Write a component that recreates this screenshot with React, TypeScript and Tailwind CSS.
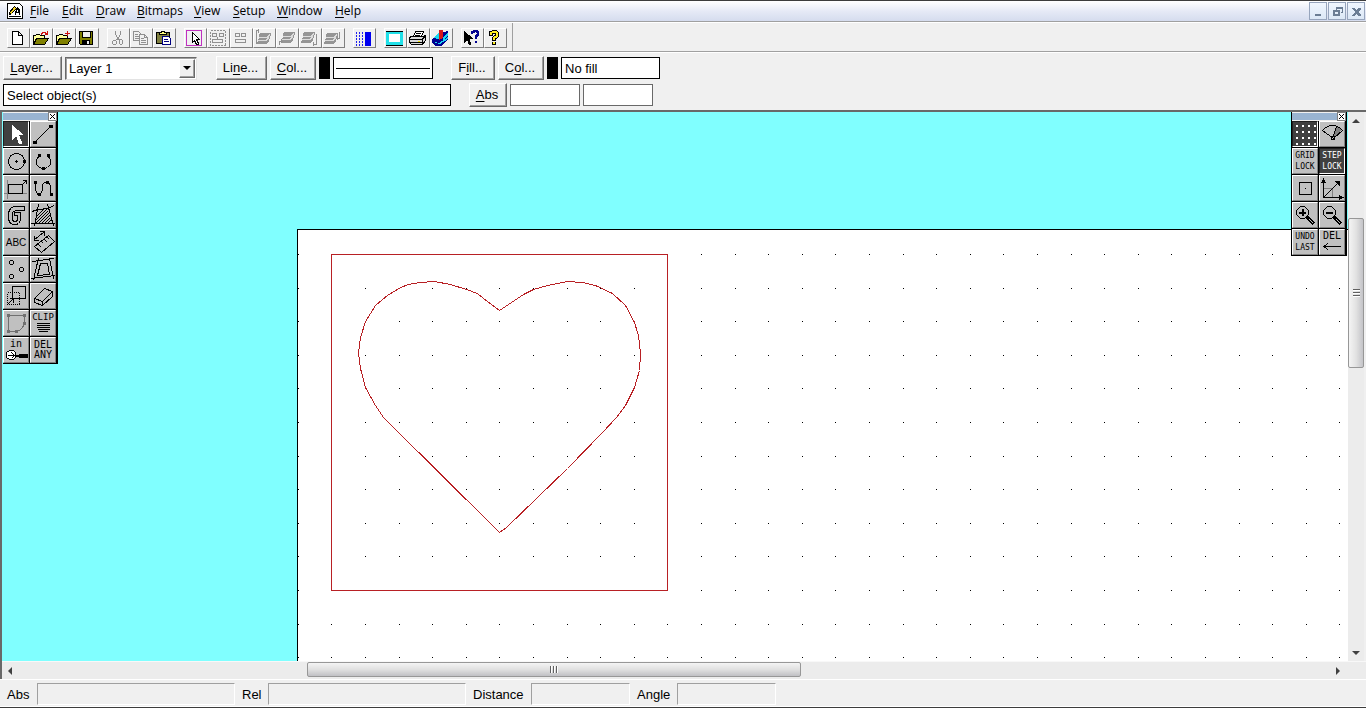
import React, { useState } from "react";
import clsx from "clsx";

const BEVEL =
  "border border-t-white border-l-white border-r-[#696969] border-b-[#696969] bg-[#f0f0f0] shadow-[inset_-1px_-1px_0_#a0a0a0]";

interface IconProps {
  size?: "bar" | "tool";
  children: React.ReactNode;
}

const Icon = ({ size = "bar", children }: IconProps) => (
  <svg
    className={clsx("block shrink-0", size === "bar" ? "h-5 w-[22px]" : "h-[26px] w-[26px]")}
    viewBox={size === "bar" ? "0 0 22 20" : "0 0 26 26"}
    fill="none"
    stroke="#000"
    shapeRendering="crispEdges"
    aria-hidden="true"
  >
    {children}
  </svg>
);

// Label with an underlined accelerator letter
const Accel = ({ text, at = 0 }: { text: string; at?: number }) => (
  <span className="whitespace-pre">
    {text.slice(0, at)}
    <span className="underline underline-offset-2">{text[at]}</span>
    {text.slice(at + 1)}
  </span>
);

/* ---------- toolbar icons ---------- */

const Folder = () => (
  <>
    <path d="M3.5 16.5v-9h2l1-1h3l1 1h4v3" fill="#ffff9c" />
    <path d="M3.5 16.5l3-6h12l-4 6z" fill="#808000" />
  </>
);

const Layers = ({ dx = 0, dy = 0 }: { dx?: number; dy?: number }) => (
  <g transform={`translate(${dx} ${dy})`} fill="#959595" stroke="none">
    <path d="M6 3h11v2l-1 1v2l-1 1v2l-3 3h-9v-2l1-1v-2l1-1v-2z" />
    <path d="M5 7.500h8l3-3M4 10.500h8l3-3" stroke="#dcdcdc" />
  </g>
);

const toolbarGroups: { name: string; icon: React.ReactNode }[][] = [
  [
    {
      name: "New",
      icon: <path d="M5.5 3.5h6l4 4v9h-10zM11.5 3.5v4h4" fill="#fff" />,
    },
    {
      name: "Open",
      icon: (
        <>
          <Folder />
          <path d="M11.5 6.5v-1h1v-1h3v1h1v1M17.5 3v4M15 6.5h3" stroke="#d01010" />
        </>
      ),
    },
    {
      name: "Merge",
      icon: (
        <>
          <Folder />
          <path d="M12 5.5h5M14.5 3v5" stroke="#d01010" />
        </>
      ),
    },
    {
      name: "Save",
      icon: (
        <>
          <path d="M3.5 3.5h13v13h-12l-1-1z" fill="#808000" />
          <path d="M6.5 3.5h8v6h-8z" fill="#f0f0f0" />
          <path d="M6 12h8v5h-8z" fill="#000" stroke="none" />
          <path d="M11 13h2v3h-2z" fill="#f0f0f0" stroke="none" />
        </>
      ),
    },
  ],
  [
    {
      name: "Cut",
      icon: (
        <g stroke="#909090">
          <path d="M8.5 3v3l1 2 1 2 2 2M13.5 3v3l-1 2-1 2-2 2" />
          <path d="M6.5 12.5h2l1 1v2l-1 1h-2l-1-1v-2zM13.5 11.5h1l1 1v3l-1 1h-1l-1-1v-3z" />
        </g>
      ),
    },
    {
      name: "Copy",
      icon: (
        <g stroke="#909090" fill="#f0f0f0">
          <path d="M3.5 3.5h5l3 3v6h-8zM5 6.5h3M5 8.5h4M5 10.5h4" />
          <path d="M9.5 6.5h5l3 3v7h-8zM14.5 6.5v3h3M11 10.5h3M11 12.5h5M11 14.5h5" />
        </g>
      ),
    },
    {
      name: "Paste",
      icon: (
        <>
          <path d="M3.5 4.5h13v11h-13z" fill="#808040" />
          <path d="M6.5 6.5v-2h2v-1h3v1h2v2z" fill="#ffff80" />
          <path d="M9.5 8.5h6l2 2v6h-8z" fill="#fff" stroke="#000080" />
          <path d="M11 11.5h4M11 13.5h5" stroke="#000080" />
        </>
      ),
    },
  ],
  [
    {
      name: "Select",
      icon: (
        <>
          <path d="M2.5 2.5h15v15h-15z" stroke="#c030c0" />
          <path d="M8.5 4.5v10l2-2 2 4h2v-1l-2-4h3z" fill="#fff" />
        </>
      ),
    },
    {
      name: "Group",
      icon: (
        <g stroke="#909090">
          <path d="M3.5 2.5h15v15h-15z" strokeDasharray="2 1" />
          <path d="M5.5 5.5h4v3h-4zM12.5 5.5h4v3h-4zM5.5 11.5h10v3h-10zM10.5 9v3" />
        </g>
      ),
    },
    {
      name: "Ungroup",
      icon: (
        <path
          d="M5.5 5.5h4v3h-4zM11.5 5.5h4v3h-4zM5.5 11.5h10v3h-10z"
          stroke="#909090"
        />
      ),
    },
    {
      name: "To front",
      icon: (
        <>
          <Layers dx={1} dy={2} />
          <path d="M6 2.500h-2.500v13M5.500 1v4" stroke="#909090" />
        </>
      ),
    },
    {
      name: "Forward",
      icon: (
        <>
          <Layers dx={2} dy={1} />
          <path d="M3.500 17v-4h3M5.500 11v4" stroke="#909090" />
        </>
      ),
    },
    {
      name: "Backward",
      icon: (
        <>
          <Layers dx={-1} dy={1} />
          <path d="M17.500 6v10h-4M14.500 14v4" stroke="#909090" />
        </>
      ),
    },
    {
      name: "To back",
      icon: (
        <>
          <Layers dx={-1} dy={2} />
          <path d="M17.500 4v6h-3M15.500 8v4" stroke="#909090" />
        </>
      ),
    },
  ],
  [
    {
      name: "Bitmap grid",
      icon: (
        <>
          <path d="M3.5 4v14M6.5 4v14M9.5 4v14" strokeDasharray="2 1" stroke="#2020f0" />
          <path d="M12 4h6v14h-6z" fill="#0000f0" stroke="none" />
        </>
      ),
    },
  ],
  [
    {
      name: "Full view",
      icon: (
        <>
          <path d="M2 3h17v14h-17z" fill="#20e0e8" stroke="none" />
          <path d="M2 3.5h17M2 17.5h17" />
          <path d="M5 6h11v8h-11z" fill="#fff" stroke="none" />
        </>
      ),
    },
    {
      name: "Print",
      icon: (
        <>
          <path d="M6.5 8.5l2-5h8l-2 5z" fill="#fff" />
          <path d="M9 5.5h5M8 7.5h5" />
          <path d="M2.5 9.5l2-1h12l2-1v5l-3 4h-11l-2-2z" fill="#d8d8d8" />
          <path d="M3 11.5h12l3-3M3 14.5h12v2M15.5 11v5" />
          <path d="M11 13.5h2" stroke="#f0e000" />
        </>
      ),
    },
    {
      name: "Library",
      icon: (
        <>
          <path d="M2 11l7-6 9-2v8l-7 7h-6l-3-3z" fill="#000090" stroke="none" />
          <path d="M3 10l6-5h2l-2 6zM13 9l5-5v4l-5 4zM4 14l5 1 9-6v2l-8 5-5-1z" fill="#18d8f0" stroke="none" />
          <path d="M9 2h4v8l-4 2z" fill="#d81818" stroke="none" />
        </>
      ),
    },
  ],
  [
    {
      name: "Context help",
      icon: (
        <>
          <path d="M3 3v12l3-3 2 5h2l-1-6h4z" fill="#000" stroke="none" />
          <path d="M11 6v-2h2v-1h3v1h1v3h-1v1h-1v3M15 13v2" stroke="#000090" strokeWidth="2" />
        </>
      ),
    },
    {
      name: "Help",
      icon: (
        <>
          <path d="M7 8v-3l2-1h3l1 1v3l-3 2v3M10 14v3" strokeWidth="4" />
          <path d="M7 7v-2l2-1h3l1 1v3l-3 2v2M10 14v2" stroke="#ffee20" strokeWidth="2" />
        </>
      ),
    },
  ],
];

/* ---------- tool palettes ---------- */

interface Tool {
  name: string;
  icon?: React.ReactNode;
  lines?: string[];
  textClass?: string;
  active?: boolean;
}

const SMALL = "text-[8px] leading-[11px]";

const drawTools: Tool[] = [
  {
    name: "Select",
    active: true,
    icon: <path d="M9 4v15l4-4 3 8h3v-2l-3-7h5z" fill="#fff" stroke="none" />,
  },
  {
    name: "Line",
    icon: (
      <>
        <path d="M5 21L21 5" />
        <path d="M3 20h4v3h-4zM19 4h4v3h-4z" fill="#000" stroke="none" />
      </>
    ),
  },
  {
    name: "Circle",
    icon: (
      <>
        <circle cx="13.5" cy="13.5" r="8" />
        <path d="M12 13h3v1h-3zM13 12h1v3h-1zM20 12h3v3h-3z" fill="#000" stroke="none" />
      </>
    ),
  },
  {
    name: "Arc",
    icon: (
      <>
        <path d="M9.500 7.500l-3 4v5l3 3 4 1.500 4-1.500 3-3v-5l-3-4" />
        <path d="M8 6h3v3h-3zM17 6h3v3h-3zM12 19h3v3h-3z" fill="#000" stroke="none" />
      </>
    ),
  },
  {
    name: "Rectangle",
    icon: (
      <>
        <path d="M4.5 5v19M1 18.5h23" stroke="#808080" />
        <path d="M5.5 9.5h14v9h-14zM20 9l4-4M20 5.5h4M23.5 5v4" />
      </>
    ),
  },
  {
    name: "Curve",
    icon: (
      <>
        <path d="M5.5 7v8l2 4h3l2-4v-5l2-3h4l2 4v9" />
        <path d="M4 6h3v3h-3zM16 6h3v3h-3zM8 18h3v3h-3zM20 18h3v3h-3z" fill="#000" stroke="none" />
      </>
    ),
  },
  {
    name: "Path",
    icon: (
      <path d="M21.5 4.5v4h-9l-3 2v7l1 2h3l1-2v-4h-3v-3h6v8l-2 3-2 1h-3l-3-1-2-4v-7l2-4 3-2z" />
    ),
  },
  {
    name: "Hatch area",
    icon: (
      <>
        <path d="M2 9.5l6-2 10-1 6-3M8.5 2l-4 22M17.5 2l6 22M1 21.5h24" />
        <path d="M6 15L14 7M6 18L17 7M6 21L18 9M9 21L19 11M12 21L20 13M15 21L20 16M18 21L21 18" />
      </>
    ),
  },
  { name: "Text", lines: ["ABC"], textClass: "font-sans text-[10px] leading-[14px]" },
  {
    name: "Dimension",
    icon: (
      <>
        <path d="M4.5 17.5l14-11 6 6-13 11zM8 15l3 3M11 12l2 2M14 10l3 3M17 8l2 2" />
        <path d="M4 11l10-8M4.5 7v4.5h4M10 2.5h4.5v4" />
      </>
    ),
  },
  {
    name: "Points",
    icon: (
      <path d="M7.5 4.5h2l1 1v2l-1 1h-2l-1-1v-2zM17.5 11.5h2l1 1v2l-1 1h-2l-1-1v-2zM7.5 18.5h2l1 1v2l-1 1h-2l-1-1v-2z" />
    ),
  },
  {
    name: "Offset",
    icon: (
      <>
        <path d="M2 5.5l8-1 14-2M8.500 2l-5 22M19.500 2l4 21M1 22.500l24-3" />
        <path d="M10.500 7.500h7l2 11-12 1z" />
      </>
    ),
  },
  {
    name: "Resize",
    icon: (
      <>
        <path d="M9.5 3.5h13v12h-13z" />
        <path d="M4.5 9.5h12v12h-12z" strokeDasharray="1 1" />
        <path d="M5 21l5-5M10.5 20v-4.5h-4" />
      </>
    ),
  },
  {
    name: "Extrude",
    icon: <path d="M4.5 15.5l10-10 8 3v5l-10 9-8-3zM4.5 15.5l8 3v4M12.5 18.5l10-10" />,
  },
  {
    name: "Edit nodes",
    icon: (
      <>
        <path d="M5.5 5.5h16v8l-2 4-3 3-4 1h-7z" stroke="#707070" />
        <path
          d="M4 4h3v3h-3zM20 4h3v3h-3zM4 20h3v3h-3zM12 20h3v3h-3zM20 12h3v3h-3z"
          fill="#707070"
          stroke="none"
        />
      </>
    ),
  },
  {
    name: "Clip",
    lines: ["CLIP"],
    textClass: "text-[9px] leading-[10px]",
    icon: <path d="M7 1.5h13M7 3.5h13M7 5.5h13M8 7.5h12M9 9.5h9" />,
  },
  {
    name: "Zoom in units",
    lines: ["in"],
    textClass: "text-[10px] leading-[9px]",
    icon: (
      <>
        <path d="M6.5 2.5h4l2 2v5l-2 2h-4l-3-2v-5z" fill="#fff" />
        <path d="M5 7.5h6M8.5 4.500l3 3-3 3" />
        <path d="M13 7.5h3M16.5 6.5h7v2h-7z" strokeWidth="2" />
      </>
    ),
  },
  { name: "Delete any", lines: ["DEL", "ANY"], textClass: "text-[10px] leading-[10px]" },
];

const Magnifier = () => (
  <>
    <path d="M8.5 4.5h4l4 4v4l-4 4h-4l-4-4v-4z" />
    <path d="M15 15l7 7" strokeWidth="4" />
    <path d="M17 17l4 4" stroke="#c0c0c0" />
  </>
);

const viewTools: Tool[] = [
  {
    name: "Grid",
    active: true,
    icon: (
      <path
        d="M4 5h20M4 11h20M4 17h20M4 23h20"
        strokeWidth="2"
        strokeDasharray="2 4"
        stroke="#fff"
      />
    ),
  },
  {
    name: "Angle",
    icon: (
      <>
        <path d="M18 5l5 3-8 9-1-2z" fill="#808080" stroke="none" />
        <path d="M3.5 9.5l3-3 5-2h4l5 2 3 3-9 8zM17.5 5l-3 10" />
        <path d="M12.5 15.5h3v3h-3z" />
      </>
    ),
  },
  { name: "Grid lock", lines: ["GRID", "LOCK"], textClass: SMALL },
  { name: "Step lock", active: true, lines: ["STEP", "LOCK"], textClass: SMALL },
  {
    name: "Page view",
    icon: (
      <>
        <path d="M7.5 7.5h12v12h-12z" />
        <path d="M13 13h1v1h-1z" fill="#000" stroke="none" />
      </>
    ),
  },
  {
    name: "Axes",
    icon: (
      <>
        <path d="M5 13.5h8.5v9" stroke="#808080" />
        <path d="M4.5 4v18.5h19M5 22L20 7" />
        <path d="M2 8h5l-2.5-5zM20 20v5l5-2.500zM15 6h6v6z" fill="#000" stroke="none" />
      </>
    ),
  },
  {
    name: "Zoom in",
    icon: (
      <>
        <Magnifier />
        <path d="M7 10.5h7M10.5 7v7" strokeWidth="2" />
      </>
    ),
  },
  {
    name: "Zoom out",
    icon: (
      <>
        <Magnifier />
        <path d="M7 10.5h7" strokeWidth="2" />
      </>
    ),
  },
  { name: "Undo last", lines: ["UNDO", "LAST"], textClass: SMALL },
  {
    name: "Delete",
    lines: ["DEL"],
    textClass: "text-[10px] leading-[10px]",
    icon: <path d="M5 5.5h17M9 2l-4 3.500 4 3.500" />,
  },
];

const ToolButton = ({ tool }: { tool: Tool }) => {
  const [on, setOn] = useState(!!tool.active);
  return (
    <button
      title={tool.name}
      aria-label={tool.name}
      onClick={() => setOn(!on)}
      className={clsx(
        "flex h-[26px] w-[26px] flex-col items-center overflow-hidden border font-['DejaVu_Sans_Mono',monospace]",
        tool.icon && tool.lines ? "justify-start pt-px" : "justify-center",
        on
          ? "border-t-[#202020] border-r-white border-b-white border-l-[#202020] bg-[#404040] text-white"
          : "border-t-white border-r-[#808080] border-b-[#808080] border-l-white bg-[#c0c0c0] text-black"
      )}
    >
      {tool.lines?.map((line) => (
        <span key={line} className={clsx("block shrink-0", tool.textClass)}>
          {tool.textClass?.includes("font-sans") ? (
            <span className="font-['Liberation_Sans',sans-serif]">{line}</span>
          ) : (
            line
          )}
        </span>
      ))}
      {tool.icon && <Icon size="tool">{tool.icon}</Icon>}
    </button>
  );
};

const Palette = ({ tools, label, className }: { tools: Tool[]; label: string; className: string }) => (
  <section aria-label={label} className={clsx("absolute top-0 border-r-2 border-black bg-black", className)}>
    <div className="-mr-px flex h-[9px] bg-[#f0f0f0]">
      <div className="mt-px h-[7px] flex-1 bg-[#99b4d1]" />
      <button aria-label="Close" className="flex h-[9px] w-[9px] items-center justify-center bg-white">
        <svg className="h-[9px] w-[9px]" viewBox="0 0 9 9" stroke="#000" fill="none" shapeRendering="crispEdges">
          <path d="M.5 .5h8v8h-8z" stroke="#808080" />
          <path d="M2 2l5 5M7 2l-5 5" />
        </svg>
      </button>
    </div>
    <div className="grid grid-cols-2 gap-px pb-px">
      {tools.map((tool) => (
        <ToolButton key={tool.name} tool={tool} />
      ))}
    </div>
  </section>
);

/* ---------- drawing ---------- */

const GRID_STEP = 33.6;
const COLUMNS = Array.from({ length: 70 }, (_, i) => Math.round(295.8 + i * GRID_STEP));
const ROWS = Array.from({ length: 40 }, (_, i) => Math.round(142 + i * GRID_STEP));
const DOTS = ROWS.map((y) => COLUMNS.map((x) => `M${x} ${y}h1v1h-1z`).join("")).join("");

const HEART =
  "497,198 481,186 475,181 464,177 448,172 432,169 418,170 406,172 398,175 385,183 373,193 363,209 358,225 356,241 358,256 363,275 373,293 381,305 497,420 504,415 565,356 600,320 614,305 623,293 632,275 637,258 638,241 636,223 632,210 623,193 610,181 593,173 580,170 565,169 545,173 531,177 521,182";

const Drawing = () => (
  <svg className="absolute inset-0 h-full w-full" fill="none" shapeRendering="crispEdges" role="img" aria-label="Heart drawing">
    <rect x="295" y="117" width="100%" height="100%" fill="#fff" />
    <path d="M295.5 4000V117.5H4000" stroke="#000" />
    <path d={DOTS} fill="#000" />
    <g stroke="#b82024" transform="translate(.5 .5)">
      <rect x="329" y="142" width="336" height="336" />
      <polygon points={HEART} />
    </g>
  </svg>
);

/* ---------- scroll bars ---------- */

const VerticalScroll = () => (
  <div className="flex w-4 flex-col bg-[#ececec]">
    <button aria-label="Scroll up" className="flex h-[17px] items-center justify-center">
      <span className="border-x-4 border-b-4 border-x-transparent border-b-[#404040]" />
    </button>
    <div className="flex-[89]" />
    <div className="flex flex-[149] flex-col items-center justify-center gap-px rounded-xs border border-[#979797] bg-linear-to-r from-[#f4f4f4] via-[#e2e2e2] to-[#c4c4c8]">
      <span className="h-0.5 w-[7px] border-b border-white bg-[#606060]" />
      <span className="h-0.5 w-[7px] border-b border-white bg-[#606060]" />
      <span className="h-0.5 w-[7px] border-b border-white bg-[#606060]" />
    </div>
    <div className="flex-[277]" />
    <button aria-label="Scroll down" className="flex h-[17px] items-center justify-center">
      <span className="border-x-4 border-t-4 border-x-transparent border-t-[#404040]" />
    </button>
  </div>
);

const HorizontalScroll = () => (
  <div className="flex h-[18px] border-t border-[#f8f8f8] bg-[#ececec] pr-5">
    <button aria-label="Scroll left" className="flex w-4 items-center justify-center">
      <span className="border-y-4 border-r-4 border-y-transparent border-r-[#404040]" />
    </button>
    <div className="flex-[289]" />
    <div className="mb-0.5 flex flex-[493] items-center justify-center gap-px rounded-xs border border-[#979797] bg-linear-to-b from-[#f4f4f4] via-[#e0e0e0] to-[#c0c0c4]">
      <span className="h-[7px] w-0.5 border-r border-white bg-[#606060]" />
      <span className="h-[7px] w-0.5 border-r border-white bg-[#606060]" />
      <span className="h-[7px] w-0.5 border-r border-white bg-[#606060]" />
    </div>
    <div className="flex-[530]" />
    <button aria-label="Scroll right" className="flex w-4 items-center justify-center">
      <span className="border-y-4 border-l-4 border-y-transparent border-l-[#404040]" />
    </button>
  </div>
);

/* ---------- bars ---------- */

const menus = [
  { text: "File", width: "w-8" },
  { text: "Edit", width: "w-[34px]" },
  { text: "Draw", width: "w-[41px]" },
  { text: "Bitmaps", width: "w-[57px]" },
  { text: "View", width: "w-[39px]" },
  { text: "Setup", width: "w-11" },
  { text: "Window", width: "w-[58px]" },
  { text: "Help", width: "w-8" },
];

const windowButtons = [
  { name: "Minimize", d: "M5 11h6v2h-6z" },
  { name: "Restore", d: "M7 4h7v6h-2v-1h1v-3h-5v1h-1zM4 7h7v6h-7zM6 9v2h3v-2z" },
  { name: "Close", d: "M4 5h3l1 2h1l1-2h3v1l-3 3 3 3v1h-3l-1-2h-1l-1 2h-3v-1l3-3-3-3z" },
];

const MenuBar = () => (
  <nav className="flex h-[21px] items-center border-b border-[#a0a0a0] bg-linear-to-b from-white via-[#e6eaf6] to-[#d5dcee] pr-px pl-[7px] font-['Open_Sans',sans-serif] text-xs text-black">
    <svg className="mr-[7px] h-4 w-4" viewBox="0 0 16 16" fill="none" stroke="#000" shapeRendering="crispEdges" aria-hidden="true">
      <path d="M.5 .5h12l3 3v12h-15z" fill="#fff" />
      <path d="M2.500 9.500l5-6 2 2-5 5-2 1z" fill="#f0d020" />
      <path d="M8 12l2-7h1l2 7M9 9.5h4M2 13.5h12M10.5 4v3M12.500 6v6" />
    </svg>
    {menus.map((menu) => (
      <button key={menu.text} className={clsx("text-left", menu.width)}>
        <Accel text={menu.text} />
      </button>
    ))}
    <div className="ml-auto flex gap-px">
      {windowButtons.map((button) => (
        <button
          key={button.name}
          aria-label={button.name}
          className="h-[18px] w-[18px] border border-[#97a5bd] bg-linear-to-b from-[#f0f6fe] to-[#dce8f6]"
        >
          <svg className="h-4 w-4" viewBox="0 0 16 16" fill="#6b7d94" fillRule="evenodd" shapeRendering="crispEdges">
            <path d={button.d} />
          </svg>
        </button>
      ))}
    </div>
  </nav>
);

const ToolBar = () => (
  <div className="flex h-[30px] border-t border-b border-t-white border-b-[#a0a0a0] pl-[7px]">
    <div className="flex items-center gap-2 border-r border-[#a0a0a0] pt-px pr-[5px]">
      {toolbarGroups.map((group) => (
        <div key={group[0].name} className="flex">
          {group.map((item) => (
            <button
              key={item.name}
              title={item.name}
              aria-label={item.name}
              className="h-5 w-[23px] border border-t-white border-r-[#808080] border-b-[#808080] border-l-white bg-[#f0f0f0]"
            >
              <span className="-m-px block">
                <Icon>{item.icon}</Icon>
              </span>
            </button>
          ))}
        </div>
      ))}
    </div>
  </div>
);

const TextButton = ({ text, at, className }: { text: string; at?: number; className: string }) => (
  <button className={clsx("flex h-6 items-center justify-center pr-0.5", BEVEL, className)}>
    <Accel text={text} at={at} />
  </button>
);

const OptionsBar = () => {
  const [layer, setLayer] = useState("Layer 1");
  return (
    <div className="flex flex-col gap-[3px] border-t border-b-2 border-t-white border-b-[#696969] pt-[3px] pb-[3px] pl-[3px]">
      <div className="flex items-center">
        <TextButton text="Layer..." className="mr-[3px] w-[59px]" />
        <div className="relative mr-[19px] w-[132px]">
          <select
            aria-label="Layer"
            value={layer}
            onChange={(e) => setLayer(e.target.value)}
            className="h-[23px] w-full appearance-none border border-t-[#696969] border-r-[#e3e3e3] border-b-[#e3e3e3] border-l-[#696969] bg-white pt-px pl-[3px] shadow-[inset_1px_1px_0_#a0a0a0] outline-none"
          >
            <option>Layer 1</option>
            <option>Layer 2</option>
          </select>
          <span
            className={clsx(
              "pointer-events-none absolute top-0.5 right-0.5 flex h-[19px] w-4 items-center justify-center",
              BEVEL
            )}
          >
            <span className="border-x-4 border-t-4 border-x-transparent border-t-black" />
          </span>
        </div>
        <TextButton text="Line..." at={2} className="mr-[3px] w-[51px]" />
        <TextButton text="Col..." className="mr-[3px] w-[46px]" />
        <span className="mr-[3px] h-[22px] w-[11px] bg-black" />
        <span className="mr-[18px] flex h-[22px] w-[100px] items-center border border-black bg-white px-0.5">
          <span className="h-px flex-1 bg-black" />
        </span>
        <TextButton text="Fill..." at={1} className="mr-[3px] w-11" />
        <TextButton text="Col..." at={1} className="mr-[3px] w-[46px]" />
        <span className="mr-[3px] h-[22px] w-[11px] bg-black" />
        <input
          aria-label="Fill style"
          readOnly
          value="No fill"
          className="h-[22px] w-[99px] border border-black bg-white px-[3px] outline-none"
        />
      </div>
      <div className="flex items-center">
        <input
          aria-label="Prompt"
          readOnly
          value="Select object(s)"
          className="mr-[18px] h-[22px] w-[448px] border border-black bg-white px-[3px] outline-none"
        />
        <TextButton text="Abs" className="mr-[3px] w-[38px]" />
        <input aria-label="X" className="mr-[3px] h-[22px] w-[70px] border border-[#696969] bg-white px-1" />
        <input aria-label="Y" className="h-[22px] w-[70px] border border-[#696969] bg-white px-1" />
      </div>
    </div>
  );
};

const statusFields = [
  { label: "Abs", id: "abs", labelWidth: "w-[30px]", width: "w-[198px]" },
  { label: "Rel", id: "rel", labelWidth: "w-[26px]", width: "w-[198px]" },
  { label: "Distance", id: "distance", labelWidth: "w-[58px]", width: "w-[99px]" },
  { label: "Angle", id: "angle", labelWidth: "w-10", width: "w-[99px]" },
];

const StatusBar = () => (
  <footer className="flex h-[28px] items-center gap-[7px] border-t border-b border-t-white border-b-white pt-0.5 pl-[7px]">
    {statusFields.map((field) => (
      <div key={field.id} className="flex items-center">
        <label htmlFor={field.id} className={clsx("pt-px", field.labelWidth)}>
          {field.label}
        </label>
        <output
          id={field.id}
          className={clsx(
            "block h-[22px] border border-t-[#a0a0a0] border-r-white border-b-white border-l-[#a0a0a0]",
            field.width
          )}
        />
      </div>
    ))}
  </footer>
);

const App = () => (
  <div className="flex h-screen flex-col overflow-hidden border-t border-b border-[#3c3c3c] bg-[#f0f0f0] font-['Liberation_Sans',Arial,sans-serif] text-[13px] text-black">
    <MenuBar />
    <ToolBar />
    <OptionsBar />
    <div className="flex min-h-0 flex-1 flex-col border-l-2 border-[#696969]">
      <div className="flex min-h-0 flex-1">
        <main className="relative flex-1 overflow-hidden bg-[#80ffff]">
          <Drawing />
          <Palette tools={drawTools} label="Drawing tools" className="left-px" />
          <Palette tools={viewTools} label="View tools" className="right-px border-l" />
        </main>
        <VerticalScroll />
        <div className="w-0.5" />
      </div>
      <HorizontalScroll />
    </div>
    <StatusBar />
  </div>
);

export default App;
